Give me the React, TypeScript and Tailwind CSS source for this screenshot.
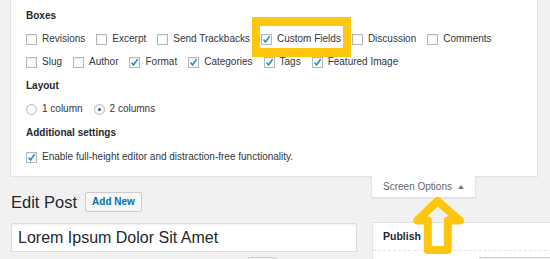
import React from "react";

const Check = ({ checked }: { checked?: boolean }) => (
  <span className="relative block w-[11px] h-[11px] shrink-0 border border-[#b4b9be] bg-white shadow-[inset_0_1px_2px_rgba(0,0,0,0.08)]">
    {checked && (
      <svg className="absolute left-0 top-0" width="9" height="9" viewBox="0 0 9 9">
        <path d="M1.6 4.6 L3.5 6.9 L7.6 1.2" fill="none" stroke="#1e8cbe" strokeWidth="1.5" />
      </svg>
    )}
  </span>
);

const Radio = ({ checked }: { checked?: boolean }) => (
  <span className="relative flex items-center justify-center w-[11px] h-[11px] shrink-0 rounded-full border border-[#b4b9be] bg-white shadow-[inset_0_1px_2px_rgba(0,0,0,0.08)]">
    {checked && <span className="block w-[3px] h-[3px] rounded-full bg-[#1e5f8c]" />}
  </span>
);

const Item = ({ label, checked }: { label: string; checked?: boolean }) => (
  <label className="flex items-center mr-[11px]">
    <Check checked={checked} />
    <span className="ml-[5px] whitespace-nowrap">{label}</span>
  </label>
);

export default function App() {
  return (
    <div className="relative w-[550px] h-[259px] overflow-hidden bg-[#f1f1f1] font-['Liberation_Sans',Arial,sans-serif] text-[10px] text-[#32373c]">
      {/* Screen options panel */}
      <div className="ml-[10px] w-[528px] bg-white border-x border-b border-[#e2e2e2] pl-[15px] pb-[11px]">
        <div className="pt-[9px] leading-[14px] font-bold text-[#23282d]">Boxes</div>
        <div className="flex items-center h-[16px] mt-[8px] leading-[16px]">
          <Item label="Revisions" />
          <Item label="Excerpt" />
          <Item label="Send Trackbacks" />
          <Item label="Custom Fields" checked />
          <Item label="Discussion" />
          <Item label="Comments" />
        </div>
        <div className="flex items-center h-[16px] mt-[7px] leading-[16px]">
          <Item label="Slug" />
          <Item label="Author" />
          <Item label="Format" checked />
          <Item label="Categories" checked />
          <Item label="Tags" checked />
          <Item label="Featured Image" checked />
        </div>
        <div className="mt-[9px] leading-[14px] font-bold text-[#23282d]">Layout</div>
        <div className="flex items-center h-[16px] mt-[8px] leading-[16px]">
          <label className="flex items-center mr-[11px]">
            <Radio />
            <span className="ml-[5px]">1 column</span>
          </label>
          <label className="flex items-center">
            <Radio checked />
            <span className="ml-[5px]">2 columns</span>
          </label>
        </div>
        <div className="mt-[9px] leading-[14px] font-bold text-[#23282d]">Additional settings</div>
        <div className="flex items-center h-[16px] mt-[9px] leading-[16px]">
          <Item label="Enable full-height editor and distraction-free functionality." checked />
        </div>
      </div>

      {/* Heading row + screen options tab */}
      <div className="flex justify-between items-start">
        <div className="mt-[15px] ml-[11px] flex items-center h-[20px]">
          <h1 className="text-[16.5px] leading-[20px] font-normal text-[#23282d]">Edit Post</h1>
          <button className="ml-[8px] h-[20px] px-[6px] rounded-[2px] border border-[#ccc] bg-[#f7f7f7] text-[10px] font-semibold text-[#0073aa] leading-[18px]">
            Add New
          </button>
        </div>
        <div className="-mt-px mr-[74px] w-[105px] h-[22px] bg-white border-x border-b border-[#e2e2e2] flex items-center justify-center text-[#666] text-[10px] shadow-[0_1px_1px_rgba(0,0,0,0.04)]">
          <span>Screen Options</span>
          <svg className="ml-[6px]" width="6" height="4" viewBox="0 0 6 4">
            <path d="M0 4 L3 0 L6 4 Z" fill="#777" />
          </svg>
        </div>
      </div>

      {/* Editor row */}
      <div className="flex items-start mt-[10px]">
        <div className="ml-[11px] w-[346px] shrink-0">
          <div className="mt-[1px] h-[29px] bg-white border border-[#ddd] shadow-[inset_0_1px_2px_rgba(0,0,0,0.07)] flex items-center pl-[6px] text-[16px] text-[#23282d]">
            Lorem Ipsum Dolor Sit Amet
          </div>
          <div className="mt-[5px] ml-[237px] w-[29px] h-[10px] border border-[#ccc] bg-[#f7f7f7] rounded-[2px]" />
        </div>
        <div className="ml-[15px] w-[200px] shrink-0 bg-white border-l border-t border-[#e2e2e2]">
          <div className="h-[28px] flex items-center pl-[10px] border-b border-dashed border-[#e2e2e2] text-[10.5px] font-bold text-[#23282d]">
            Publish
          </div>
          <div className="pt-[6px] pl-[106px]">
            <div className="w-[80px] h-[20px] border border-[#ccc] bg-[#f7f7f7] rounded-[2px]" />
          </div>
        </div>
      </div>

      {/* Yellow highlight box */}
      <div className="absolute left-[252px] top-[17px] w-[99px] h-[40px] border-x-[8px] border-y-[9px] border-[#fec60e] pointer-events-none" />

      {/* Yellow arrow */}
      <svg className="absolute left-[405px] top-[190px] pointer-events-none" width="65" height="69" viewBox="0 0 65 69">
        <path
          d="M32.5 11 L12.3 30.5 L22.8 30.5 L22.8 60 L42.8 60 L42.8 30.5 L55 30.5 Z"
          fill="none"
          stroke="#fec60e"
          strokeWidth="8"
          strokeLinejoin="round"
        />
      </svg>
    </div>
  );
}
